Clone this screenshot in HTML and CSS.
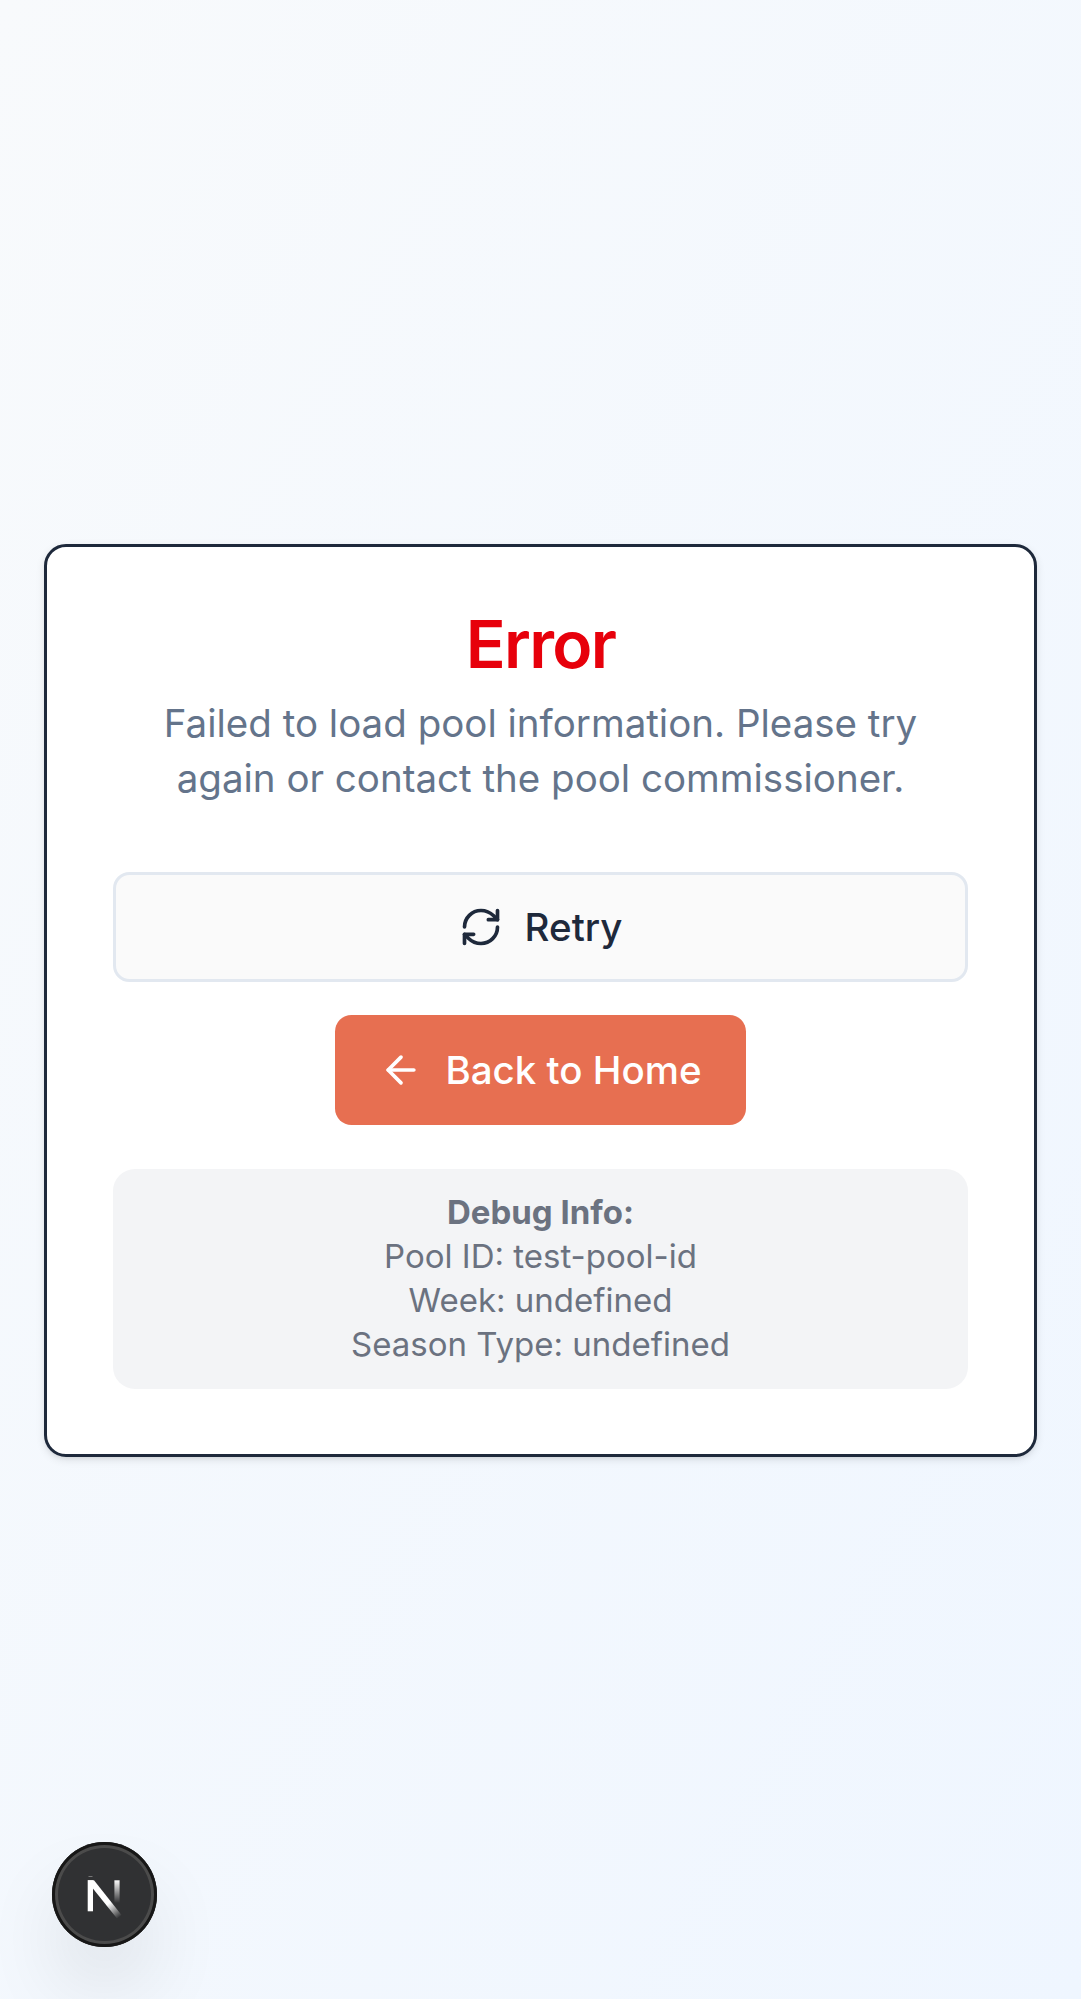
FILE: index.html
```html
<!DOCTYPE html>
<html lang="en">
<head>
<meta charset="utf-8">
<title>Error</title>
<link rel="stylesheet" href="styles.css">
</head>
<body>
<main class="page">
  <section class="card">
    <header class="card-header">
      <h1 class="title">Error</h1>
      <p class="message">Failed to load pool information. Please try again or contact the pool commissioner.</p>
    </header>
    <div class="actions">
      <button class="button button-outline" type="button">
        <svg class="icon" viewBox="0 0 24 24"><path d="M3 12a9 9 0 0 1 9-9 9.750 9.750 0 0 1 6.740 2.740L21 8"/><path d="M21 3v5h-5"/><path d="M21 12a9 9 0 0 1-9 9 9.750 9.750 0 0 1-6.740-2.740L3 16"/><path d="M8 16H3v5"/></svg>
        Retry
      </button>
      <a class="button button-primary">
        <svg class="icon" viewBox="0 0 24 24"><path d="m12 19-7-7 7-7"/><path d="M19 12H5"/></svg>
        Back to Home
      </a>
    </div>
    <div class="debug">
      <strong>Debug Info:</strong>
      <span>Pool ID: test-pool-id</span>
      <span>Week: undefined</span>
      <span>Season Type: undefined</span>
    </div>
  </section>
</main>
<div class="dev-badge">
  <svg class="dev-logo" viewBox="0 0 40 40">
    <defs>
      <linearGradient id="diagonal" x1="24" y1="28" x2="35" y2="42" gradientUnits="userSpaceOnUse"><stop stop-color="#fff"/><stop offset="1" stop-color="#fff" stop-opacity="0"/></linearGradient>
      <linearGradient id="stem" x1="0" y1="5" x2="0" y2="28" gradientUnits="userSpaceOnUse"><stop stop-color="#fff"/><stop offset="1" stop-color="#fff" stop-opacity="0"/></linearGradient>
    </defs>
    <path d="M2.700 5.300H8V36.300H2.700Z" fill="#fff"/>
    <path d="M2.700 5.300H9L36.500 40L32 43.500L7.500 13Z" fill="url(#diagonal)"/>
    <path d="M29.400 5.300h5.200V28h-5.200Z" fill="url(#stem)"/>
    <path d="M3.500 1.200h4v.8h-4Z" fill="#888"/>
  </svg>
</div>
</body>
</html>
```
FILE: styles.css
```css
* { box-sizing: border-box; }
body { margin: 0; font-family: Inter, sans-serif; }
.page {
  display: flex;
  align-items: center;
  min-height: 1999px;
  padding: 2px 44px 0;
  background: linear-gradient(to bottom right, #f8fafc, #eff6ff);
}
.card {
  width: 100%;
  padding: 66px 66px 65px;
  text-align: center;
  background: #fff;
  border: 3px solid #1e293b;
  border-radius: 22px;
  box-shadow: 0 3px 8px rgb(0 0 0 / 10%), 0 3px 5px -3px rgb(0 0 0 / 10%);
}
.card-header { display: flex; flex-direction: column; gap: 21px; }
.title { margin: 0; font-size: 66px; line-height: 62px; font-weight: 600; letter-spacing: -1.65px; color: #e7000b; }
.message { margin: 0; font-size: 38.5px; line-height: 55px; color: #64748b; }
.actions { display: flex; flex-direction: column; align-items: center; gap: 33px; margin-top: 66px; }
.button {
  display: flex;
  align-items: center;
  justify-content: center;
  gap: 22px;
  height: 110px;
  padding: 0 44px;
  font: 500 38.5px/55px Inter, sans-serif;
  border: 0;
  border-radius: 16.5px;
}
.button-outline { width: 100%; color: #1e293b; background: #fafafa; border: 3px solid #e2e8f0; }
.button-primary { color: #fff; background: #e76f51; }
.icon { width: 44px; height: 44px; fill: none; stroke: currentColor; stroke-width: 2; stroke-linecap: round; stroke-linejoin: round; }
.debug {
  display: flex;
  flex-direction: column;
  margin-top: 44px;
  padding: 21px 22px 23px;
  font-size: 33px;
  line-height: 44px;
  color: #6b7280;
  background: #f3f4f6;
  border-radius: 22px;
}
.debug strong { font-weight: 700; }
.dev-badge {
  position: fixed;
  left: 52px;
  bottom: 52px;
  display: flex;
  align-items: center;
  justify-content: center;
  width: 105px;
  height: 105px;
  border-radius: 50%;
  background: #303133;
  box-shadow: inset 0 0 0 3px #171717, inset 0 0 0 6px #4b4b4b, 0 44px 88px -22px rgb(0 0 0 / 24%);
}
.dev-logo { width: 40px; height: 40px; overflow: visible; }
```
